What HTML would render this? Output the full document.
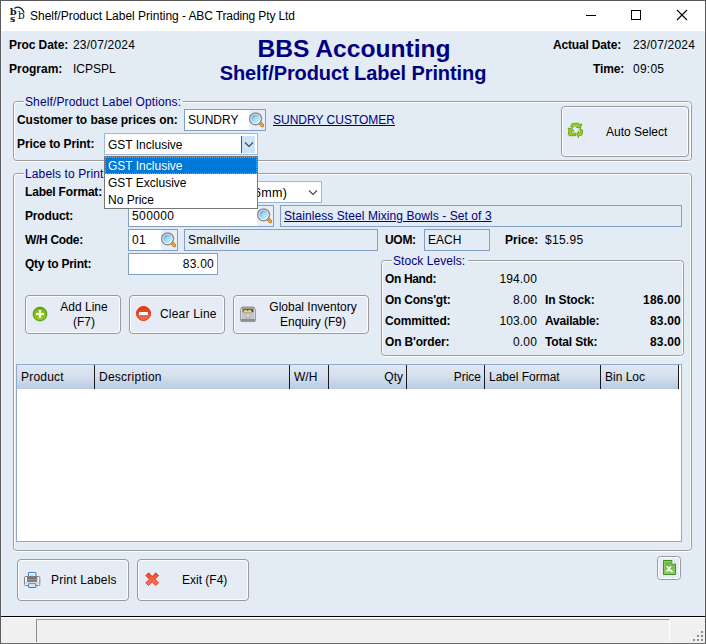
<!DOCTYPE html>
<html><head><meta charset="utf-8">
<style>
html,body{margin:0;padding:0;}
body{width:706px;height:644px;overflow:hidden;background:#e3ebf4;font-family:"Liberation Sans",sans-serif;font-size:12px;color:#000;position:relative;}
.a{position:absolute;white-space:nowrap;line-height:14px;}
.b{font-weight:bold;}
.nv{color:#000080;}
.r{text-align:right;}
.gb{position:absolute;border:1px solid #9c9c9c;border-radius:3.5px;box-shadow:inset 1px 1px 0 #fff,inset -1px 0 0 #fff,0 1px 0 #fff;box-sizing:border-box;}
.lg{position:absolute;background:#e3ebf4;color:#000080;font-size:12px;line-height:14px;white-space:nowrap;padding:0 1px;}
.in{position:absolute;box-sizing:border-box;border:1px solid #7f9fc6;background:#fff;line-height:20px;padding-left:3px;white-space:nowrap;}
.ro{background:#e3ebf4;}
.btn{position:absolute;box-sizing:border-box;border:1px solid #9c9c9c;border-radius:4px;background:#e6ecf6;box-shadow:inset 0 0 0 1px #fbfcfe;}
.lnk{color:#000080;text-decoration:underline;}
.vs{position:absolute;top:365px;width:1px;height:24px;background:#1a1a1a;}
</style></head><body>
<!-- window frame -->
<div style="position:absolute;left:0;top:0;width:706px;height:31px;background:#fff;"></div>
<div style="position:absolute;left:0;top:0;width:706px;height:1px;background:#5a5a5a;"></div>
<div style="position:absolute;left:0;top:0;width:1px;height:644px;background:#5c5c5c;"></div>
<div style="position:absolute;left:1px;top:31px;width:1px;height:585px;background:#e9f0fa;"></div>
<div style="position:absolute;left:704px;top:31px;width:1px;height:585px;background:#e9f0fa;"></div>
<div style="position:absolute;left:705px;top:0;width:1px;height:644px;background:#5a5a5a;"></div>
<!-- title icon -->
<svg style="position:absolute;left:8px;top:4px" width="20" height="20" viewBox="0 0 20 20">
<text x="1.7" y="10.6" font-family="DejaVu Serif,Liberation Serif,serif" font-weight="bold" font-size="10.0" fill="#1a1a1a">b</text>
<text x="2" y="17.7" font-family="DejaVu Serif,Liberation Serif,serif" font-weight="bold" font-size="9.4" fill="#1a1a1a">s</text>
<text x="9.7" y="14.9" font-family="DejaVu Serif,Liberation Serif,serif" font-size="11" fill="#1a1a1a">b</text>
<path d="M6.4 4.4 Q10.2 1.6 13.6 4.8 Q15.4 6.6 16.1 8.9" fill="none" stroke="#1a1a1a" stroke-width="1.25"/>
</svg>
<div class="a" id="ttl" style="left:30px;top:8px;font-size:12px;line-height:16px;letter-spacing:0px;">Shelf/Product Label Printing<span style="letter-spacing:-0.12px"> - ABC Trading Pty Ltd</span></div>
<!-- window controls -->
<div style="position:absolute;left:586px;top:15px;width:10px;height:1px;background:#000;"></div>
<div style="position:absolute;left:631px;top:10px;width:10px;height:10px;box-sizing:border-box;border:1px solid #000;"></div>
<svg style="position:absolute;left:676px;top:9px" width="12" height="12" viewBox="0 0 12 12"><path d="M1 1 L11 11 M11 1 L1 11" stroke="#000" stroke-width="1.1" fill="none"/></svg>

<!-- header -->
<div class="a b" style="left:9px;top:38px;letter-spacing:-0.09px;">Proc Date:</div>
<div class="a" style="left:73px;top:38px;letter-spacing:0.2px;">23/07/2024</div>
<div class="a b" style="left:9px;top:62px;">Program:</div>
<div class="a" style="left:73px;top:62px;">ICPSPL</div>
<div class="a b nv" id="h1" style="left:1px;width:706px;text-align:center;top:35px;font-size:24.6px;line-height:28px;">BBS Accounting</div>
<div class="a b nv" id="h2" style="left:0;width:706px;text-align:center;top:61px;font-size:20px;line-height:24px;letter-spacing:-0.08px;">Shelf/Product Label Printing</div>
<div class="a b r" style="left:500px;width:121px;top:38px;letter-spacing:-0.17px;">Actual Date:</div>
<div class="a" style="left:633px;top:38px;letter-spacing:0.2px;">23/07/2024</div>
<div class="a b r" style="left:500px;width:124px;top:62px;letter-spacing:-0.18px;">Time:</div>
<div class="a" style="left:633px;top:62px;letter-spacing:0.24px;">09:05</div>

<!-- group 1 -->
<div class="gb" style="left:13px;top:101px;width:679px;height:60px;"></div>
<div class="lg" style="left:24px;top:95px;padding-right:2px;letter-spacing:0.12px;">Shelf/Product Label Options:</div>
<div class="a b" style="left:17px;top:113px;letter-spacing:-0.05px;">Customer to base prices on:</div>
<div class="in" style="left:184px;top:109px;width:82px;height:22px;">SUNDRY</div>
<div style="position:absolute;left:249px;top:110px;width:16px;height:20px;background:#e7edf7;"></div>
<svg style="position:absolute;left:249px;top:112px" width="17" height="17" viewBox="0 0 17 17"><use href="#mag"/></svg>
<div class="a lnk" style="left:273px;top:113px;">SUNDRY CUSTOMER</div>
<div class="a b" style="left:17px;top:137px;letter-spacing:-0.09px;">Price to Print:</div>
<div class="in" style="left:104px;top:133px;width:154px;height:22px;border-color:#9db7d6;padding-top:1px;">GST Inclusive</div>
<div style="position:absolute;left:241px;top:136px;width:14px;height:17px;background:#cce4f7;border-left:1px solid #1464b4;box-sizing:border-box;"></div>
<svg style="position:absolute;left:244px;top:141px" width="10" height="7" viewBox="0 0 10 7"><path d="M1 1.5 L5 5.5 L9 1.5" stroke="#444" stroke-width="1.1" fill="none"/></svg>
<div class="btn" style="left:561px;top:106px;width:128px;height:51px;"></div>
<div class="a" style="left:606px;top:125px;">Auto Select</div>
<svg style="position:absolute;left:566px;top:121px" width="19" height="19" viewBox="0 0 19 19"><use href="#recy"/></svg>

<!-- group 2 -->
<div class="gb" style="left:13px;top:173px;width:679px;height:378px;"></div>
<div class="lg" style="left:24px;top:167px;letter-spacing:0.12px;">Labels to Print</div>
<div class="a b" style="left:25px;top:185px;letter-spacing:-0.18px;">Label Format:</div>
<div class="in" style="left:128px;top:181px;width:194px;height:22px;border-color:#9db7d6;"></div>
<div class="a" style="left:254px;top:186px;font-size:12.5px;letter-spacing:0.3px;">6mm)</div>
<svg style="position:absolute;left:308px;top:189px" width="10" height="7" viewBox="0 0 10 7"><path d="M1 1.5 L5 5.5 L9 1.5" stroke="#444" stroke-width="1.1" fill="none"/></svg>

<div class="a b" style="left:25px;top:209px;letter-spacing:-0.15px;">Product:</div>
<div class="in" style="left:128px;top:205px;width:146px;height:22px;letter-spacing:0.4px;">500000</div>
<div style="position:absolute;left:257px;top:206px;width:16px;height:20px;background:#e7edf7;"></div>
<svg style="position:absolute;left:257px;top:208px" width="17" height="17" viewBox="0 0 17 17"><use href="#mag"/></svg>
<div class="in ro" style="left:280px;top:205px;width:402px;height:22px;"><span class="lnk" style="letter-spacing:0.075px">Stainless Steel Mixing Bowls - Set of 3</span></div>

<div class="a b" style="left:25px;top:233px;letter-spacing:-0.31px;">W/H Code:</div>
<div class="in" style="left:128px;top:229px;width:50px;height:22px;letter-spacing:0.3px;">01</div>
<div style="position:absolute;left:161px;top:230px;width:16px;height:20px;background:#e7edf7;"></div>
<svg style="position:absolute;left:161px;top:232px" width="17" height="17" viewBox="0 0 17 17"><use href="#mag"/></svg>
<div class="in ro" style="left:184px;top:229px;width:194px;height:22px;letter-spacing:0.18px;">Smallville</div>
<div class="a b" style="left:385px;top:233px;letter-spacing:-0.3px;">UOM:</div>
<div class="in ro" style="left:424px;top:229px;width:66px;height:22px;">EACH</div>
<div class="a b" style="left:505px;top:233px;">Price:</div>
<div class="a" style="left:545px;top:233px;letter-spacing:0.28px;">$15.95</div>

<div class="a b" style="left:25px;top:257px;letter-spacing:-0.23px;">Qty to Print:</div>
<div class="in r" style="left:128px;top:253px;width:90px;height:22px;padding-right:3px;letter-spacing:0.25px;">83.00</div>

<!-- stock levels -->
<div class="gb" style="left:381px;top:260px;width:303px;height:96px;"></div>
<div class="lg" style="left:392px;top:254px;padding-right:3px;letter-spacing:0.07px;">Stock Levels:</div>
<div class="a b" style="left:385px;top:272px;letter-spacing:-0.36px;">On Hand:</div>
<div class="a r" style="left:477px;width:60px;top:272px;letter-spacing:0.15px;">194.00</div>
<div class="a b" style="left:385px;top:293px;letter-spacing:-0.25px;">On Cons'gt:</div>
<div class="a r" style="left:477px;width:60px;top:293px;letter-spacing:0.15px;">8.00</div>
<div class="a b" style="left:545px;top:293px;letter-spacing:-0.13px;">In Stock:</div>
<div class="a b r" style="left:621px;width:60px;top:293px;letter-spacing:0.2px;">186.00</div>
<div class="a b" style="left:385px;top:314px;letter-spacing:-0.12px;">Committed:</div>
<div class="a r" style="left:477px;width:60px;top:314px;letter-spacing:0.15px;">103.00</div>
<div class="a b" style="left:545px;top:314px;letter-spacing:-0.19px;">Available:</div>
<div class="a b r" style="left:621px;width:60px;top:314px;letter-spacing:0.2px;">83.00</div>
<div class="a b" style="left:385px;top:335px;letter-spacing:-0.17px;">On B'order:</div>
<div class="a r" style="left:477px;width:60px;top:335px;letter-spacing:0.15px;">0.00</div>
<div class="a b" style="left:545px;top:335px;letter-spacing:-0.15px;">Total Stk:</div>
<div class="a b r" style="left:621px;width:60px;top:335px;letter-spacing:0.2px;">83.00</div>

<!-- buttons -->
<div class="btn" style="left:25px;top:295px;width:96px;height:39px;"></div>
<svg style="position:absolute;left:32px;top:306px" width="16" height="16" viewBox="0 0 16 16"><use href="#plus"/></svg>
<div class="a" style="left:49px;width:70px;text-align:center;top:300px;line-height:15px;">Add Line<br>(F7)</div>
<div class="btn" style="left:129px;top:295px;width:96px;height:39px;"></div>
<svg style="position:absolute;left:136px;top:306px" width="15" height="15" viewBox="0 0 15 15"><use href="#minus"/></svg>
<div class="a" style="left:160px;top:307px;letter-spacing:0.2px;">Clear Line</div>
<div class="btn" style="left:233px;top:295px;width:136px;height:39px;"></div>
<svg style="position:absolute;left:240px;top:306px" width="16" height="16" viewBox="0 0 16 16"><use href="#drawer"/></svg>
<div class="a" style="left:262px;width:102px;text-align:center;top:300px;line-height:15px;">Global Inventory<br>Enquiry (F9)</div>

<!-- grid -->
<div style="position:absolute;left:16px;top:364px;width:666px;height:178px;box-sizing:border-box;border:1px solid #8faacb;background:#fff;"></div>
<div id="gh" style="position:absolute;left:17px;top:365px;width:661px;height:24px;background:linear-gradient(#dfe8f3,#d5e0ee 45%,#b8cbe2);"></div>
<div class="a" style="left:21px;top:370px;letter-spacing:0.2px;">Product</div>
<div class="a" style="left:99px;top:370px;letter-spacing:0.25px;">Description</div>
<div class="a" style="left:294px;top:370px;">W/H</div>
<div class="a r" style="left:340px;width:63px;top:370px;">Qty</div>
<div class="a r" style="left:418px;width:63px;top:370px;">Price</div>
<div class="a" style="left:489px;top:370px;">Label Format</div>
<div class="a" style="left:605px;top:370px;">Bin Loc</div>
<div class="vs" style="left:94px"></div><div class="vs" style="left:289px"></div><div class="vs" style="left:328px"></div><div class="vs" style="left:406px"></div><div class="vs" style="left:484px"></div><div class="vs" style="left:600px"></div><div class="vs" style="left:678px"></div>

<!-- bottom buttons -->
<div class="btn" style="left:17px;top:559px;width:112px;height:42px;"></div>
<svg style="position:absolute;left:24px;top:572px" width="17" height="16" viewBox="0 0 17 16"><use href="#prn"/></svg>
<div class="a" style="left:51px;top:573px;letter-spacing:0.2px;">Print Labels</div>
<div class="btn" style="left:137px;top:559px;width:112px;height:42px;"></div>
<svg style="position:absolute;left:145px;top:572px" width="15" height="15" viewBox="0 0 15 15"><use href="#xx"/></svg>
<div class="a" style="left:182px;top:573px;">Exit (F4)</div>
<div class="btn" style="left:657px;top:556px;width:24px;height:24px;border-radius:3.5px;"></div>
<svg style="position:absolute;left:663px;top:560px" width="13" height="15" viewBox="0 0 13 15"><use href="#xls"/></svg>

<!-- dropdown list -->
<div style="position:absolute;left:104px;top:156px;width:154px;height:53px;box-sizing:border-box;border:1px solid #787878;background:#fff;"></div>
<div style="position:absolute;left:105px;top:157px;width:152px;height:17px;box-sizing:border-box;background:#0078d7;border:1px dotted #ff8728;"></div>
<div class="a" style="left:108px;top:159px;color:#fff;">GST Inclusive</div>
<div class="a" style="left:108px;top:176px;">GST Exclusive</div>
<div class="a" style="left:108px;top:193px;">No Price</div>

<!-- status bar -->
<div style="position:absolute;left:1px;top:616px;width:704px;height:1px;background:#000;"></div>
<div style="position:absolute;left:1px;top:617px;width:704px;height:26px;background:#f0f0f0;"></div>
<div style="position:absolute;left:1px;top:617px;width:704px;height:1px;background:#fff;"></div>
<div style="position:absolute;left:36px;top:619px;width:634px;height:23px;box-sizing:border-box;border-left:1px solid #8c8c8c;border-top:1px solid #a0a0a0;border-right:1px solid #fff;"></div>
<svg style="position:absolute;left:693px;top:631px" width="11" height="11" viewBox="0 0 11 11" fill="#8c8c8c"><rect x="8" y="0" width="2" height="2"/><rect x="4" y="4" width="2" height="2"/><rect x="8" y="4" width="2" height="2"/><rect x="0" y="8" width="2" height="2"/><rect x="4" y="8" width="2" height="2"/><rect x="8" y="8" width="2" height="2"/></svg>
<div style="position:absolute;left:0;top:643px;width:706px;height:1px;background:#6a6a6a;"></div>

<!-- icon defs -->
<svg width="0" height="0" style="position:absolute">
<defs>
<radialGradient id="gl" cx="0.68" cy="0.7" r="0.8"><stop offset="0" stop-color="#c4f0fc"/><stop offset="0.55" stop-color="#9cd6f7"/><stop offset="1" stop-color="#4a9ee8"/></radialGradient>
<radialGradient id="gg" cx="0.5" cy="0.6" r="0.6"><stop offset="0" stop-color="#a2d81c"/><stop offset="0.7" stop-color="#7fc00f"/><stop offset="1" stop-color="#4f9a0a"/></radialGradient>
<linearGradient id="gr" x1="0" y1="0" x2="0" y2="1"><stop offset="0" stop-color="#e23a16"/><stop offset="0.5" stop-color="#ea4a2a"/><stop offset="1" stop-color="#f47c60"/></linearGradient>
<linearGradient id="gx" x1="0" y1="0" x2="0" y2="1"><stop offset="0" stop-color="#ea4826"/><stop offset="1" stop-color="#f57a64"/></linearGradient>
<linearGradient id="ge" x1="0" y1="0" x2="0" y2="1"><stop offset="0" stop-color="#6cb440"/><stop offset="1" stop-color="#86c85a"/></linearGradient>
<radialGradient id="grc" cx="0.5" cy="0.5" r="0.6"><stop offset="0" stop-color="#b4e01e"/><stop offset="1" stop-color="#86c410"/></radialGradient>
<g id="recy" stroke="#5e9e08" stroke-width="0.8" stroke-linejoin="round" fill="url(#grc)">
<path d="M4.5 5.7 L6.3 2.4 L12.2 2.2 L13.0 3.3 L15.8 3.1 L14.5 6.9 L10.3 6.5 L11.7 5.5 L10.9 4.7 L8.3 4.8 L7.0 6.5 Z"/>
<path d="M14.0 7.5 L16.5 8.9 L16.5 12.4 L15.6 14.3 L12.6 14.5 L12.6 16.8 L10.6 13.1 L12.6 10.1 L12.6 12.0 L14.2 11.9 L14.7 10.4 L13.2 8.6 Z"/>
<path d="M2.1 7.2 L6.4 7.7 L7.8 10.3 L5.9 9.7 L5.0 12.2 L9.6 12.2 L9.6 14.7 L3.1 14.7 L2.3 13.5 L2.7 9.5 Z"/>
</g>
<g id="mag">
<line x1="10.8" y1="10.7" x2="13.5" y2="13.5" stroke="#c47a12" stroke-width="3.4" stroke-linecap="round"/>
<line x1="11.6" y1="11.6" x2="13.4" y2="13.4" stroke="#f2a62a" stroke-width="2" stroke-linecap="round"/>
<circle cx="6.6" cy="6.8" r="5.9" fill="#fdfdfd" stroke="#8f8f8f" stroke-width="1.5"/>
<circle cx="6.6" cy="6.8" r="4.2" fill="url(#gl)"/>
</g>
<g id="plus">
<circle cx="8" cy="8" r="6.9" fill="url(#gg)" stroke="#4f9a0a" stroke-width="0.9"/>
<path d="M8 4 V12 M4 8 H12" stroke="#fff" stroke-width="2.1"/>
</g>
<g id="minus">
<circle cx="7.5" cy="7.5" r="7" fill="url(#gr)" stroke="#cf3412" stroke-width="1"/>
<rect x="3" y="6" width="9" height="3.1" fill="#fff"/>
</g>
<g id="drawer">
<path d="M2 0.5 H14 L15.5 2.5 H0.5 Z" fill="#9a9a9a"/>
<rect x="0.5" y="2.5" width="15" height="13" rx="1" fill="#dcdcdc" stroke="#9c9c9c"/>
<rect x="1" y="13" width="14" height="2.6" fill="#8f8f8f"/>
<rect x="2.5" y="3.2" width="11" height="3.3" fill="#3c4666"/>
<path d="M3.6 6.3 V4.3 L6.2 3.9 L7.6 5 L8.8 3.9 L11 4.2 L12 6.3 Z" fill="#f6dc3c"/>
<rect x="2.6" y="6.8" width="10.8" height="6" fill="#c6c6c6" stroke="#b0b0b0" stroke-width=".5"/>
<rect x="6" y="8" width="4" height="2.8" fill="#e4e4e4" stroke="#a2a2a2" stroke-width=".6"/>
</g>
<g id="prn">
<rect x="4.5" y="0.5" width="7.4" height="6" rx="1" fill="#fff" stroke="#3c82cc" stroke-width="1.1"/>
<rect x="6" y="2.2" width="4.4" height="1.5" fill="#b4d4f4"/>
<rect x="0.5" y="4.5" width="15.3" height="9" rx="1" fill="#f6f6f6" stroke="#7e7e7e"/>
<rect x="3" y="4.9" width="10.2" height="5" fill="#747474"/>
<rect x="3" y="7" width="10.2" height="1" fill="#979797"/>
<rect x="1.6" y="9.9" width="13" height="2.2" fill="#d4d4d4"/>
<rect x="4.5" y="11.8" width="7.4" height="3.6" rx="1" fill="#fff" stroke="#3c82cc" stroke-width="1.1"/>
<rect x="6" y="12.8" width="4.4" height="1.2" fill="#cfe6fa"/>
</g>
<g id="xx">
<path d="M0.8 3.6 L3.6 0.8 L7.2 4.4 L10.8 0.8 L13.6 3.6 L10 7.2 L13.6 10.8 L10.8 13.6 L7.2 10 L3.6 13.6 L0.8 10.8 L4.4 7.2 Z" fill="url(#gx)" stroke="#dc3c1c" stroke-width=".9" stroke-linejoin="round"/>
</g>
<g id="xls">
<path d="M0.5 0.5 H9 L12.5 4 V14.5 H0.5 Z" fill="url(#ge)" stroke="#3f8e1e"/>
<path d="M1.5 1.5 H8.5 V4.5 H11.5 V13.5 H1.5 Z" fill="none" stroke="#8fd068" stroke-width=".8"/>
<path d="M8.6 0.6 V4.4 H12.4 Z" fill="#2f7a12"/>
<path d="M9.3 0.3 L12.7 3.7 H9.3 Z" fill="#fbfdf9"/>
<path d="M3.6 6.3 L9.6 12 M8.2 6.3 L3.4 11.2" stroke="#fff" stroke-width="1.25"/>
<path d="M3.2 10.9 H9.6" stroke="#fff" stroke-width="1"/>
</g>
</defs>
</svg>
</body></html>
